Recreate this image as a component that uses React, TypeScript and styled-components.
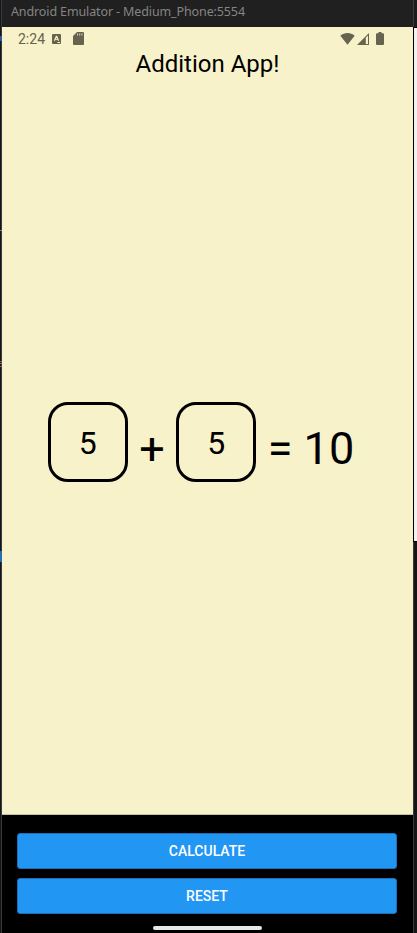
import React from "react";
import styled, { createGlobalStyle } from "styled-components";

const GlobalStyle = createGlobalStyle`
  * { box-sizing: border-box; }
  body { margin: 0; background: #181818; overflow: hidden; }
`;

const Desktop = styled.div`
  display: grid;
  grid-template-columns: 2px 411px 4px;
  width: 417px;
  height: 933px;
  font-family: Roboto, sans-serif;
`;

const LeftEdge = styled.div`
  display: flex;
  flex-direction: column;
  background: #15161a;
  border-right: 1px solid #3a3a3a;
`;

const Speck = styled.div<{ $gap: number; $height: number; $color: string }>`
  flex: none;
  width: 2px;
  margin-top: ${(p) => p.$gap}px;
  height: ${(p) => p.$height}px;
  background: ${(p) => p.$color};
`;

const RightEdge = styled.div`
  display: grid;
  grid-template-rows: 27px 515px 1fr;
`;

const EdgeTop = styled.div`
  background: #1c1c1c;
  border-left: 1px solid #3c3c3c;
`;

const EdgeWindow = styled.div`
  background: #f1f1f1;
  border: 1px solid #000;
  border-right: 0;
`;

const EdgeBottom = styled.div`
  background: #161616;
  border-left: 1px solid #3a3a3a;
`;

const Emulator = styled.div`
  display: grid;
  grid-template-rows: 27px 788px 118px;
`;

const TitleBar = styled.header`
  display: flex;
  align-items: center;
  padding: 0 0 3px 9px;
  background: #202020;
  color: #858585;
  font: 12.5px/20px "Noto Sans", sans-serif;
  white-space: nowrap;
`;

const TitleText = styled.span`
  letter-spacing: -0.12px;
`;

const Screen = styled.main`
  display: flex;
  flex-direction: column;
  background: #f8f2ca;
  border-bottom: 1px solid #c5c1a0;
  color: #000;
`;

const StatusBar = styled.div`
  display: flex;
  align-items: center;
  height: 23px;
  padding: 0 29px 0 16px;
  color: #66634f;
`;

const Clock = styled.span`
  width: 34px;
  font-size: 14px;
  line-height: 18px;
`;

const StatusIcon = styled.svg<{ $gap?: number }>`
  display: block;
  flex: none;
  margin-left: ${(p) => p.$gap ?? 0}px;
`;

const Spacer = styled.div`
  flex: 1;
`;

const Heading = styled.h1`
  margin: 0;
  height: 28px;
  font-size: 24px;
  line-height: 28px;
  font-weight: 400;
  text-align: center;
`;

const Equation = styled.div`
  display: flex;
  align-items: center;
  height: 80px;
  margin: 324px 0 0 45.7px;
`;

const NumberInput = styled.div`
  display: flex;
  align-items: center;
  justify-content: center;
  width: 80px;
  height: 80px;
  padding-top: 1px;
  border: 3px solid #000;
  border-radius: 20px;
  font-size: 32px;
  line-height: 38px;
`;

const Operator = styled.span<{ $width: number }>`
  width: ${(p) => p.$width}px;
  padding-top: 13px;
  font-size: 45px;
  line-height: 53px;
  text-align: center;
  white-space: pre;
`;

const Result = styled(Operator)`
  padding-left: 0.4px;
  text-align: left;
`;

const Actions = styled.footer`
  display: flex;
  flex-direction: column;
  align-items: center;
  padding: 18px 2px 0 0;
  background: #000;
`;

const ActionButton = styled.button`
  flex: none;
  width: 380px;
  height: 36px;
  margin: 0 0 9px;
  padding: 0 0 0 1px;
  border: 1px solid #1b70b8;
  border-radius: 3px;
  background: #2296f3;
  color: #fff;
  font: 500 14px/16px Roboto, sans-serif;
`;

const HomeIndicator = styled.div`
  width: 109px;
  height: 4px;
  margin: 3px 0 0 1px;
  border-radius: 2px;
  background: #e8e8e8;
`;

export default function App() {
  return (
    <>
      <GlobalStyle />
      <Desktop>
        <LeftEdge>
          <Speck $gap={36} $height={5} $color="#3158a0" />
          <Speck $gap={189} $height={1} $color="#9b7766" />
          <Speck $gap={130} $height={1} $color="#7b6055" />
          <Speck $gap={1} $height={1} $color="#a46859" />
          <Speck $gap={2} $height={1} $color="#8d6658" />
          <Speck $gap={184} $height={11} $color="#2470b5" />
        </LeftEdge>
        <Emulator>
          <TitleBar>
            <TitleText>Android Emulator - Medium_Phone:5554</TitleText>
          </TitleBar>
          <Screen>
            <StatusBar>
              <Clock>2:24</Clock>
              <StatusIcon width="9" height="10" viewBox="0 0 9 10">
                <rect width="9" height="10" rx="1" fill="currentColor" />
                <path d="M2.4 6.8 4.3 2.4h.4L6.6 6.8M3.3 5.3h2.4M5.5 8.5h2.5" fill="none" stroke="#f8f2ca" strokeWidth="1.1" />
              </StatusIcon>
              <StatusIcon $gap={12} width="11" height="13" viewBox="0 0 11 13">
                <path d="M4 0h6a1 1 0 0 1 1 1v11a1 1 0 0 1-1 1H1a1 1 0 0 1-1-1V4Z" fill="currentColor" />
                <path d="M4.5 1.5v2M6.7 1.5v2M8.9 1.5v2" stroke="#f8f2ca" strokeWidth=".8" />
              </StatusIcon>
              <Spacer />
              <StatusIcon width="15" height="12" viewBox="0 0 15 12">
                <path d="M.3 2.8C4.4-.9 10.6-.9 14.7 2.8L7.5 11.7Z" fill="currentColor" />
              </StatusIcon>
              <StatusIcon $gap={2} width="12" height="12" viewBox="0 0 12 12">
                <path d="M0 12 12 0v12Z" fill="currentColor" />
                <path d="M8.8 4.7 11 2.5V11H8.8Z" fill="#f8f2ca" />
              </StatusIcon>
              <StatusIcon $gap={7} width="8" height="13" viewBox="0 0 8 13">
                <path d="M2.5 0h3v1.2H7a1 1 0 0 1 1 1V12a1 1 0 0 1-1 1H1a1 1 0 0 1-1-1V2.2a1 1 0 0 1 1-1h1.5Z" fill="currentColor" />
              </StatusIcon>
            </StatusBar>
            <Heading>Addition App!</Heading>
            <Equation>
              <NumberInput>5</NumberInput>
              <Operator $width={48.5}>+</Operator>
              <NumberInput>5</NumberInput>
              <Result $width={130}> = 10</Result>
            </Equation>
          </Screen>
          <Actions>
            <ActionButton>CALCULATE</ActionButton>
            <ActionButton>RESET</ActionButton>
            <HomeIndicator />
          </Actions>
        </Emulator>
        <RightEdge>
          <EdgeTop />
          <EdgeWindow />
          <EdgeBottom />
        </RightEdge>
      </Desktop>
    </>
  );
}
